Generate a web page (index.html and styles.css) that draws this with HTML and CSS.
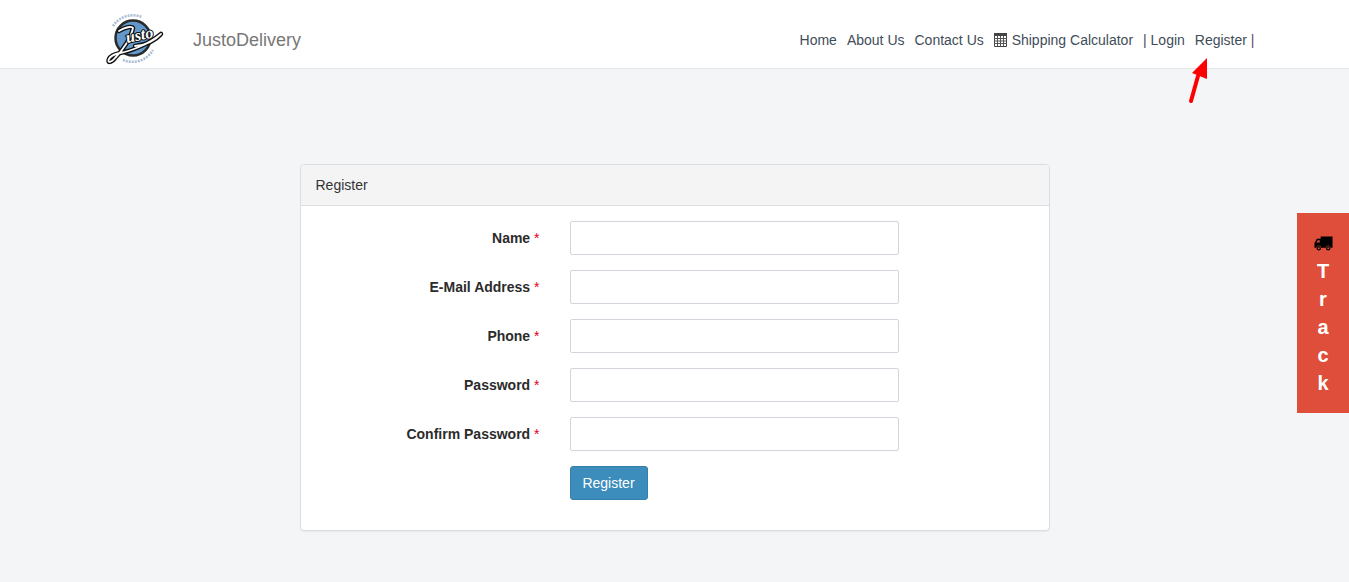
FILE: index.html
```html
<!DOCTYPE html>
<html lang="en">
<head>
<meta charset="utf-8">
<title>JustoDelivery - Register</title>
<link rel="stylesheet" href="styles.css">
</head>
<body>
<header class="topbar">
  <a class="logo" href="#" aria-label="Justo logo">
    <svg width="60" height="52" viewBox="0 0 60 52">
      <path d="M8 12A24 24 0 0 1 37 3" fill="none" stroke="#a9bcd3" stroke-width="2.500" stroke-dasharray="2 1"/>
      <path d="M18 46A24 24 0 0 0 48 36" fill="none" stroke="#a9bcd3" stroke-width="2.500" stroke-dasharray="2 1"/>
      <circle cx="28" cy="24" r="17.500" fill="#6298cc" stroke="#2a2a2a" stroke-width="2.500"/>
      <path class="sw-o" d="M14 17C20 13 27 12 28 14C26 24 18 36 10 44C6 49 2 49 4 45C6 41 10 40 15 39C26 37 44 30 56 20C50 27 40 31 30 32"/>
      <path class="sw-i" d="M14 17C20 13 27 12 28 14C26 24 18 36 10 44C6 49 2 49 4 45C6 41 10 40 15 39C26 37 44 30 56 20C50 27 40 31 30 32"/>
      <text class="logo-text" x="22" y="29" transform="rotate(-12 22 29)">usto</text>
    </svg>
  </a>
  <a class="brand" href="#">JustoDelivery</a>
  <nav class="nav">
    <a href="#">Home</a>
    <a href="#">About Us</a>
    <a href="#">Contact Us</a>
    <a href="#" class="calc">
      <svg width="13" height="14" viewBox="0 0 13 14"><path d="M.5.5h12v13H.5z" fill="#fff" stroke="#444"/><path d="M0 0h13v3H0z" fill="#444"/><path d="M3.500 3v10M6.500 3v10M9.500 3v10M0 5.500h13M0 8h13M0 10.500h13" stroke="#555" fill="none"/></svg>
      Shipping Calculator</a>
    <a href="#" class="login">| Login</a>
    <a href="#">Register <span class="pipe">|</span></a>
  </nav>
  <svg class="arrow" width="24" height="48" viewBox="0 0 24 48">
    <path d="M5 45L12 20" stroke="#f00" stroke-width="4" stroke-linecap="round" fill="none"/>
    <path d="M21 2L21 23L6 17Z" fill="#f00"/>
  </svg>
</header>

<main class="content">
  <section class="panel">
    <div class="panel-head">Register</div>
    <form class="panel-body">
      <div class="row"><label>Name <i>*</i></label><input type="text"></div>
      <div class="row"><label>E-Mail Address <i>*</i></label><input type="email"></div>
      <div class="row"><label>Phone <i>*</i></label><input type="tel"></div>
      <div class="row"><label>Password <i>*</i></label><input type="password"></div>
      <div class="row"><label>Confirm Password <i>*</i></label><input type="password"></div>
      <div class="row"><span class="spacer"></span><button type="button">Register</button></div>
    </form>
  </section>
</main>

<a class="track" href="#">
  <svg width="19" height="15" viewBox="0 0 20 15"><path d="M7 0H19.500V12H17.500A2.500 2.500 0 0 0 12.500 12H7.500A2.500 2.500 0 0 0 2.500 12H.5V7L3 2.500H7Z" fill="#000"/><circle cx="5" cy="12.500" r="1.700" fill="none" stroke="#000" stroke-width="1.300"/><circle cx="15" cy="12.500" r="1.700" fill="none" stroke="#000" stroke-width="1.300"/><path d="M2.500 6.500L4 4H6V6.500Z" fill="#df4e3a"/></svg>
  <span>T</span><span>r</span><span>a</span><span>c</span><span>k</span>
</a>
</body>
</html>
```
FILE: styles.css
```css
* { box-sizing: border-box; }
html, body { margin: 0; height: 100%; }
body {
  background: #f4f5f7;
  color: #333;
  font: 14px/20px "Liberation Sans", Arial, sans-serif;
  overflow: hidden;
}
a { color: inherit; text-decoration: none; }

.topbar {
  position: relative;
  height: 69px;
  background: #fff;
  border-bottom: 1px solid #e4e5e7;
  display: flex;
  align-items: center;
  padding: 12px 94.500px 0 105px;
}
.logo { display: flex; width: 88px; height: 52px; }
.sw-o { fill: none; stroke: #111; stroke-width: 4.500px; stroke-linecap: round; stroke-linejoin: round; }
.sw-i { fill: none; stroke: #fff; stroke-width: 1.800px; stroke-linecap: round; stroke-linejoin: round; }
.logo-text {
  font: italic 700 16px "Liberation Serif", serif;
  fill: #fff;
  stroke: #111;
  stroke-width: 2px;
  paint-order: stroke;
  stroke-linejoin: round;
}
.brand { font-size: 18px; color: #777; }
.nav { margin-left: auto; display: flex; gap: 10px; align-items: center; color: #3f4d58; }
.calc svg { vertical-align: -2px; margin-right: 1px; }
.pipe { color: #5f4a68; }
.arrow { position: absolute; left: 1186px; top: 56px; }

.content { display: flex; justify-content: center; padding-top: 95px; }
.panel {
  width: 750px;
  height: 367px;
  background: #fff;
  border: 1px solid #dcdde0;
  border-radius: 4px;
  box-shadow: 0 1px 1px rgba(0,0,0,.05);
}
.panel-head {
  height: 41px;
  padding: 10px 15px;
  background: #f4f4f5;
  border-bottom: 1px solid #dddee0;
  border-radius: 3px 3px 0 0;
}
.panel-body { padding-top: 15px; display: flex; flex-direction: column; gap: 15px; }
.row { display: flex; align-items: center; height: 34px; }
.row label, .spacer { width: 239px; margin-right: 30px; text-align: right; font-weight: 700; color: #2b2b2b; }
.row i { color: #e3001b; font-style: normal; font-weight: 400; }
.row input {
  width: 329px;
  height: 34px;
  background: #fff;
  border: 1px solid #d3d4dc;
  border-radius: 2px;
  padding: 6px 12px;
  font: inherit;
}
.row button {
  width: 78px;
  height: 34px;
  background: #3c8dbc;
  border: 1px solid #367fa9;
  border-radius: 3px;
  color: #fff;
  font: inherit;
  padding: 0;
}

.track {
  position: absolute;
  left: 1297px;
  top: 213px;
  width: 52px;
  height: 200px;
  background: #df4e3a;
  color: #fff;
  display: flex;
  flex-direction: column;
  align-items: center;
  padding-top: 23px;
  font-size: 20px;
  font-weight: 700;
  line-height: 28px;
}
.track svg { margin-bottom: 6px; }
.track span { height: 28px; }
```
